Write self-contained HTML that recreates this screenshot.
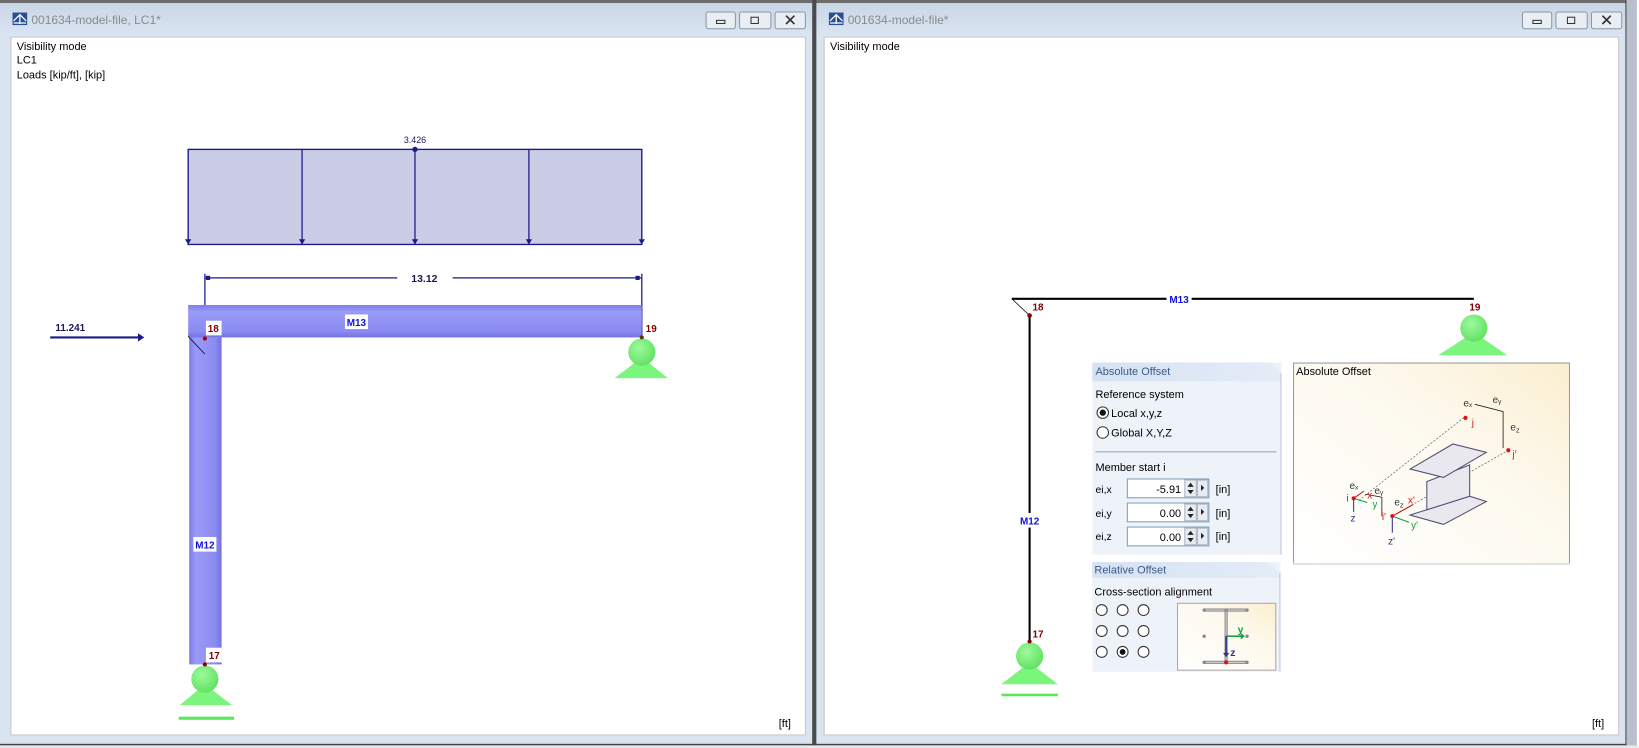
<!DOCTYPE html>
<html><head><meta charset="utf-8"><style>
html,body{margin:0;padding:0;background:#fff;overflow:hidden}
svg{display:block}
text{font-family:"Liberation Sans",sans-serif}
</style></head><body>
<svg width="1639" height="748" viewBox="0 0 1568 716" preserveAspectRatio="none" xmlns="http://www.w3.org/2000/svg">
<defs>
<linearGradient id="tb" x1="0" y1="0" x2="0" y2="1"><stop offset="0" stop-color="#c9d6e6"/><stop offset="1" stop-color="#dbe5f2"/></linearGradient>
<linearGradient id="bm" x1="0" y1="0" x2="0" y2="1"><stop offset="0" stop-color="#7b7bea"/><stop offset="0.2" stop-color="#9a9af6"/><stop offset="0.8" stop-color="#8c8cf2"/><stop offset="1" stop-color="#7272e4"/></linearGradient>
<linearGradient id="cm" x1="0" y1="0" x2="1" y2="0"><stop offset="0" stop-color="#7b7bea"/><stop offset="0.2" stop-color="#9a9af6"/><stop offset="0.8" stop-color="#8c8cf2"/><stop offset="1" stop-color="#7272e4"/></linearGradient>
<linearGradient id="cr" x1="0" y1="1" x2="1" y2="0"><stop offset="0" stop-color="#ffffff"/><stop offset="0.6" stop-color="#fdf9ee"/><stop offset="1" stop-color="#fbefd0"/></linearGradient>
<radialGradient id="ball" cx="0.4" cy="0.35" r="0.7"><stop offset="0" stop-color="#9dfa9d"/><stop offset="1" stop-color="#5fe05f"/></radialGradient>
<linearGradient id="ph" x1="0" y1="0" x2="1" y2="0"><stop offset="0" stop-color="#d6e2f3"/><stop offset="1" stop-color="#e4ecf7"/></linearGradient>
</defs>
<!-- frames -->
<rect x="0" y="0" width="1568" height="716" fill="#dae4f1"/>
<rect x="0" y="0" width="1568" height="3" fill="#6d6d6d"/>
<rect x="0" y="3" width="777" height="32" fill="url(#tb)"/>
<rect x="781" y="3" width="775" height="32" fill="url(#tb)"/>
<rect x="777" y="0" width="4" height="716" fill="#4a4a4a"/>
<rect x="1556" y="0" width="10" height="716" fill="#b9c0cb"/>
<rect x="1555" y="0" width="1" height="714" fill="#444"/>
<rect x="1566" y="0" width="2" height="716" fill="#fff"/>
<rect x="0" y="712" width="1556" height="1.5" fill="#444"/>
<rect x="0" y="713.5" width="1568" height="3" fill="#e8e8e8"/>
<!-- content areas -->
<rect x="10.5" y="35.5" width="760" height="668" fill="#fff" stroke="#c8c8c8"/>
<rect x="788.5" y="35.5" width="760" height="668" fill="#fff" stroke="#c8c8c8"/>
<!-- title icons & text -->
<g>
<rect x="12" y="12" width="14" height="12" fill="#2a4f8f"/>
<path d="M13 20 L19 14 L25 20 M19 14 V23 M13 22 H25" stroke="#fff" stroke-width="1.2" fill="none"/>
<text x="30" y="23" font-size="11.5" fill="#8a8a8a">001634-model-file, LC1*</text>
</g>
<g>
<rect x="793" y="12" width="14" height="12" fill="#2a4f8f"/>
<path d="M794 20 L800 14 L806 20 M800 14 V23 M794 22 H806" stroke="#fff" stroke-width="1.2" fill="none"/>
<text x="811" y="23" font-size="11.5" fill="#8a8a8a">001634-model-file*</text>
</g>
<!-- buttons -->
<g fill="#e9eef5" stroke="#8a97a8">
<rect x="675.5" y="11.5" width="28" height="16" rx="2"/><rect x="707.5" y="11.5" width="30" height="16" rx="2"/><rect x="741.5" y="11.5" width="29" height="16" rx="2"/>
<rect x="1456.5" y="11.5" width="28" height="16" rx="2"/><rect x="1488.5" y="11.5" width="30" height="16" rx="2"/><rect x="1522.5" y="11.5" width="29" height="16" rx="2"/>
</g>
<g stroke="#333" fill="none" stroke-width="1">
<rect x="685.5" y="19.5" width="8" height="3"/><rect x="718.5" y="16.5" width="7" height="6"/><path d="M752 15 L760 23 M760 15 L752 23" stroke-width="1.6"/>
<rect x="1466.5" y="19.5" width="8" height="3"/><rect x="1499.5" y="16.5" width="7" height="6"/><path d="M1533 15 L1541 23 M1541 15 L1533 23" stroke-width="1.6"/>
</g>
<g font-size="10.5" fill="#000">
<text x="16" y="48">Visibility mode</text><text x="16" y="61">LC1</text><text x="16" y="75">Loads [kip/ft], [kip]</text>
<text x="794" y="48">Visibility mode</text>
<text x="745" y="696">[ft]</text><text x="1523" y="696">[ft]</text>
</g>

<!-- LEFT DRAWING -->
<rect x="180" y="143" width="434" height="91" fill="#cbcce6" stroke="#1a1a8a" stroke-width="1.3"/>
<g stroke="#1a1a8a" stroke-width="1.2"><path d="M289 143V234M397 143V234M506 143V234"/></g>
<g fill="#1a1a8a"><path d="M177 229h6l-3 5zM286 229h6l-3 5zM394 229h6l-3 5zM503 229h6l-3 5zM611 229h6l-3 5z"/><circle cx="397" cy="143" r="2.5"/></g>
<text x="397" y="137" font-size="8.5" text-anchor="middle" fill="#1a1a5a">3.426</text>
<g stroke="#1a1a8a" stroke-width="1.2"><path d="M196 262V323M614 262V323M196 266H380M433 266H614"/></g>
<rect x="197" y="264" width="4" height="4" fill="#1a1a8a"/><rect x="608" y="264" width="4" height="4" fill="#1a1a8a"/>
<text x="406" y="270" font-size="10" font-weight="bold" text-anchor="middle" fill="#1a1a5a">13.12</text>
<rect x="180" y="292" width="434" height="31" fill="url(#bm)"/>
<rect x="181" y="323" width="31" height="313" fill="url(#cm)"/>
<path d="M180 322 L196 339" stroke="#000" stroke-width="0.7"/>
<path d="M48 323H132" stroke="#1a1a8a" stroke-width="2"/><path d="M132 319l6 4-6 4z" fill="#1a1a8a"/>
<text x="53" y="317" font-size="9.5" font-weight="bold" fill="#1a1a5a">11.241</text>
<rect x="330" y="301" width="22" height="14" fill="#fff"/><text x="341" y="312" font-size="9.5" font-weight="bold" text-anchor="middle" fill="#1010e0">M13</text>
<rect x="185" y="514" width="22" height="14" fill="#fff"/><text x="196" y="525" font-size="9.5" font-weight="bold" text-anchor="middle" fill="#1010e0">M12</text>
<rect x="197" y="307" width="15" height="14" fill="#fff"/><text x="204" y="318" font-size="9.5" font-weight="bold" text-anchor="middle" fill="#800000">18</text>
<rect x="616" y="307" width="15" height="14" fill="#fff"/><text x="623" y="318" font-size="9.5" font-weight="bold" text-anchor="middle" fill="#800000">19</text>
<rect x="197" y="620" width="15" height="14" fill="#fff"/><text x="205" y="631" font-size="9.5" font-weight="bold" text-anchor="middle" fill="#800000">17</text>
<circle cx="196" cy="324" r="2" fill="#a00"/>
<!-- supports left -->
<path d="M172 675 L196 655 L222 675Z" fill="#7bf57b"/>
<circle cx="196" cy="650" r="13" fill="url(#ball)"/>
<circle cx="196" cy="636" r="2" fill="#800"/>
<rect x="171" y="686" width="53" height="3" fill="#5ae85a"/>
<path d="M588 362 L614 342 L639 362Z" fill="#7bf57b"/>
<circle cx="614" cy="337" r="13" fill="url(#ball)"/>
<circle cx="614" cy="323" r="2" fill="#5a3a00"/>

<!-- RIGHT DRAWING -->
<path d="M968 286H1410M985 302V615" stroke="#000" stroke-width="2"/>
<path d="M968 286 L985 302" stroke="#000" stroke-width="0.7"/>
<rect x="1116" y="280" width="24" height="12" fill="#fff"/><text x="1128" y="290" font-size="9.5" font-weight="bold" text-anchor="middle" fill="#1010e0">M13</text>
<rect x="973" y="491" width="24" height="14" fill="#fff"/><text x="985" y="502" font-size="9.5" font-weight="bold" text-anchor="middle" fill="#1010e0">M12</text>
<text x="993" y="297" font-size="9.5" font-weight="bold" text-anchor="middle" fill="#800000">18</text>
<text x="1411" y="297" font-size="9.5" font-weight="bold" text-anchor="middle" fill="#800000">19</text>
<text x="993" y="610" font-size="9.5" font-weight="bold" text-anchor="middle" fill="#800000">17</text>
<circle cx="985" cy="302" r="2.2" fill="#800"/>
<path d="M1376 340 L1410 318 L1442 340Z" fill="#7bf57b"/>
<circle cx="1410" cy="314" r="13" fill="url(#ball)"/>
<path d="M958 655 L985 634 L1012 655Z" fill="#7bf57b"/>
<circle cx="985" cy="628" r="13" fill="url(#ball)"/>
<circle cx="985" cy="614" r="2" fill="#800"/>
<rect x="958" y="664" width="54" height="2.5" fill="#5ae85a"/>

<!-- Absolute offset panel -->
<rect x="1045" y="347" width="181" height="184" fill="#eef2f9"/>
<path d="M1045 347H1216L1226 357V365H1045Z" fill="url(#ph)"/>
<rect x="1225" y="357" width="1" height="174" fill="#b8c6e6"/>
<text x="1048" y="359" font-size="10.5" fill="#3a5a8a">Absolute Offset</text>
<g font-size="10.5" fill="#000">
<text x="1048" y="381">Reference system</text>
<text x="1063" y="399">Local x,y,z</text>
<text x="1063" y="418">Global X,Y,Z</text>
<text x="1048" y="451">Member start i</text>
<text x="1048" y="472" font-size="10">ei,x</text><text x="1048" y="495" font-size="10">ei,y</text><text x="1048" y="517" font-size="10">ei,z</text>
<text x="1163" y="472">[in]</text><text x="1163" y="495">[in]</text><text x="1163" y="517">[in]</text>
</g>
<circle cx="1055" cy="395" r="5.5" fill="#fff" stroke="#333"/><circle cx="1055" cy="395" r="3" fill="#111"/>
<circle cx="1055" cy="414" r="5.5" fill="#fff" stroke="#333"/>
<rect x="1048" y="432" width="173" height="1" fill="#a0a0a0"/>
<g>
<rect x="1078.5" y="458.5" width="78" height="18" fill="#fff" stroke="#7f9db9"/>
<rect x="1078.5" y="481.5" width="78" height="18" fill="#fff" stroke="#7f9db9"/>
<rect x="1078.5" y="504.5" width="78" height="18" fill="#fff" stroke="#7f9db9"/>
<g fill="#e8ecf2" stroke="#a9b4c2"><rect x="1133.5" y="459.5" width="11" height="16"/><rect x="1145.5" y="459.5" width="10" height="16"/><rect x="1133.5" y="482.5" width="11" height="16"/><rect x="1145.5" y="482.5" width="10" height="16"/><rect x="1133.5" y="505.5" width="11" height="16"/><rect x="1145.5" y="505.5" width="10" height="16"/></g>
<g fill="#222"><path d="M1136 466h6l-3-4zM1136 469h6l-3 4zM1149 464v6l3-3zM1136 489h6l-3-4zM1136 492h6l-3 4zM1149 487v6l3-3zM1136 512h6l-3-4zM1136 515h6l-3 4zM1149 510v6l3-3z"/></g>
<g font-size="10.5" text-anchor="end" fill="#000"><text x="1130" y="472">-5.91</text><text x="1130" y="495">0.00</text><text x="1130" y="518">0.00</text></g>
</g>
<!-- image panel -->
<rect x="1237.5" y="347.5" width="264" height="192" fill="url(#cr)" stroke="#9a9a9a"/>
<rect x="1237" y="539" width="265" height="2" fill="#e6e6e6"/>
<text x="1240" y="359" font-size="10.5" fill="#000">Absolute Offset</text>
<g stroke="#555" stroke-width="0.6" stroke-dasharray="2,1.5" fill="none"><path d="M1300 479 L1400 400M1332 494 L1443 431"/></g>
<g stroke="#505070" stroke-width="1" fill="#e8e8ee">
<path d="M1349 493 L1406 475 L1422 480 L1381 502Z"/>
<path d="M1365 461 V488 L1406 475 V445Z"/>
<path d="M1349 449 L1390 425 L1422 433 L1381 457Z"/>
</g>
<g stroke="#222" stroke-width="0.8" fill="none"><path d="M1306 473 L1322 476 V494M1411 387 L1438 394 V429"/></g>
<g stroke="#d01010" stroke-width="1"><path d="M1295 477 L1305 470M1332 494 L1352 483"/></g>
<g stroke="#10a040" stroke-width="1"><path d="M1295 477 L1308 481M1332 494 L1348 500"/></g>
<g stroke="#303090" stroke-width="1"><path d="M1295 477 V490M1332 494 V510"/></g>
<g fill="#e01010"><circle cx="1295" cy="477" r="2"/><circle cx="1332" cy="494" r="2"/><circle cx="1402" cy="400" r="2"/><circle cx="1443" cy="431" r="2"/></g>
<g font-size="9.5">
<text x="1288" y="480" fill="#e01010">i</text><text x="1322" y="498" fill="#e01010">i'</text><text x="1408" y="408" fill="#e01010">j</text><text x="1447" y="438" fill="#e01010">j'</text>
<text x="1308" y="477" fill="#e01010">x</text><text x="1347" y="482" fill="#e01010">x'</text>
<text x="1313" y="486" fill="#10a040">y</text><text x="1350" y="506" fill="#10a040">y'</text>
<text x="1292" y="499" fill="#303090">z</text><text x="1328" y="521" fill="#303090">z'</text>
<text x="1291" y="468" fill="#333">eₓ</text><text x="1315" y="473" fill="#333">eᵧ</text><text x="1334" y="484" fill="#333">e<tspan font-size="7" dy="2">z</tspan></text>
<text x="1400" y="389" fill="#333">eₓ</text><text x="1428" y="386" fill="#333">eᵧ</text><text x="1445" y="412" fill="#333">e<tspan font-size="7" dy="2">z</tspan></text>
</g>
<!-- relative offset panel -->
<rect x="1045" y="538" width="180" height="105" fill="#eef2f9"/>
<path d="M1045 538H1214L1224 548V553H1045Z" fill="url(#ph)"/>
<rect x="1224" y="548" width="1" height="95" fill="#b8c6e6"/>
<text x="1047" y="549" font-size="10.5" fill="#3a5a8a">Relative Offset</text>
<text x="1047" y="570" font-size="10.5" fill="#000">Cross-section alignment</text>
<g fill="#fff" stroke="#333">
<circle cx="1054" cy="584" r="5.2"/><circle cx="1074" cy="584" r="5.2"/><circle cx="1094" cy="584" r="5.2"/>
<circle cx="1054" cy="604" r="5.2"/><circle cx="1074" cy="604" r="5.2"/><circle cx="1094" cy="604" r="5.2"/>
<circle cx="1054" cy="624" r="5.2"/><circle cx="1074" cy="624" r="5.2"/><circle cx="1094" cy="624" r="5.2"/>
</g>
<circle cx="1074" cy="624" r="2.8" fill="#111"/>
<rect x="1126.5" y="577.5" width="94" height="64" fill="url(#cr)" stroke="#aaa"/>
<g stroke="#888" stroke-width="3" fill="none"><path d="M1152 584H1193M1152 634H1193M1173 584V634"/></g>
<g stroke="#ccc" stroke-width="1.2" fill="none"><path d="M1152 584H1193M1152 634H1193M1173 584V634"/></g>
<g fill="#888"><circle cx="1152" cy="584" r="1.6"/><circle cx="1173" cy="584" r="1.6"/><circle cx="1193" cy="584" r="1.6"/><circle cx="1152" cy="609" r="1.6"/><circle cx="1193" cy="609" r="1.6"/><circle cx="1152" cy="634" r="1.6"/><circle cx="1193" cy="634" r="1.6"/></g>
<circle cx="1173" cy="634" r="2" fill="#e01010"/>
<path d="M1173 609 H1188" stroke="#10a040" stroke-width="1.5"/><path d="M1187 606l4 3-4 3z" fill="#10a040"/>
<path d="M1173 609 V626" stroke="#303090" stroke-width="1.5"/><path d="M1170 625l3 4 3-4z" fill="#303090"/>
<text x="1184" y="606" font-size="10" font-weight="bold" fill="#10a040">y</text>
<text x="1177" y="628" font-size="10" font-weight="bold" fill="#303090">z</text>
</svg>
</body></html>
